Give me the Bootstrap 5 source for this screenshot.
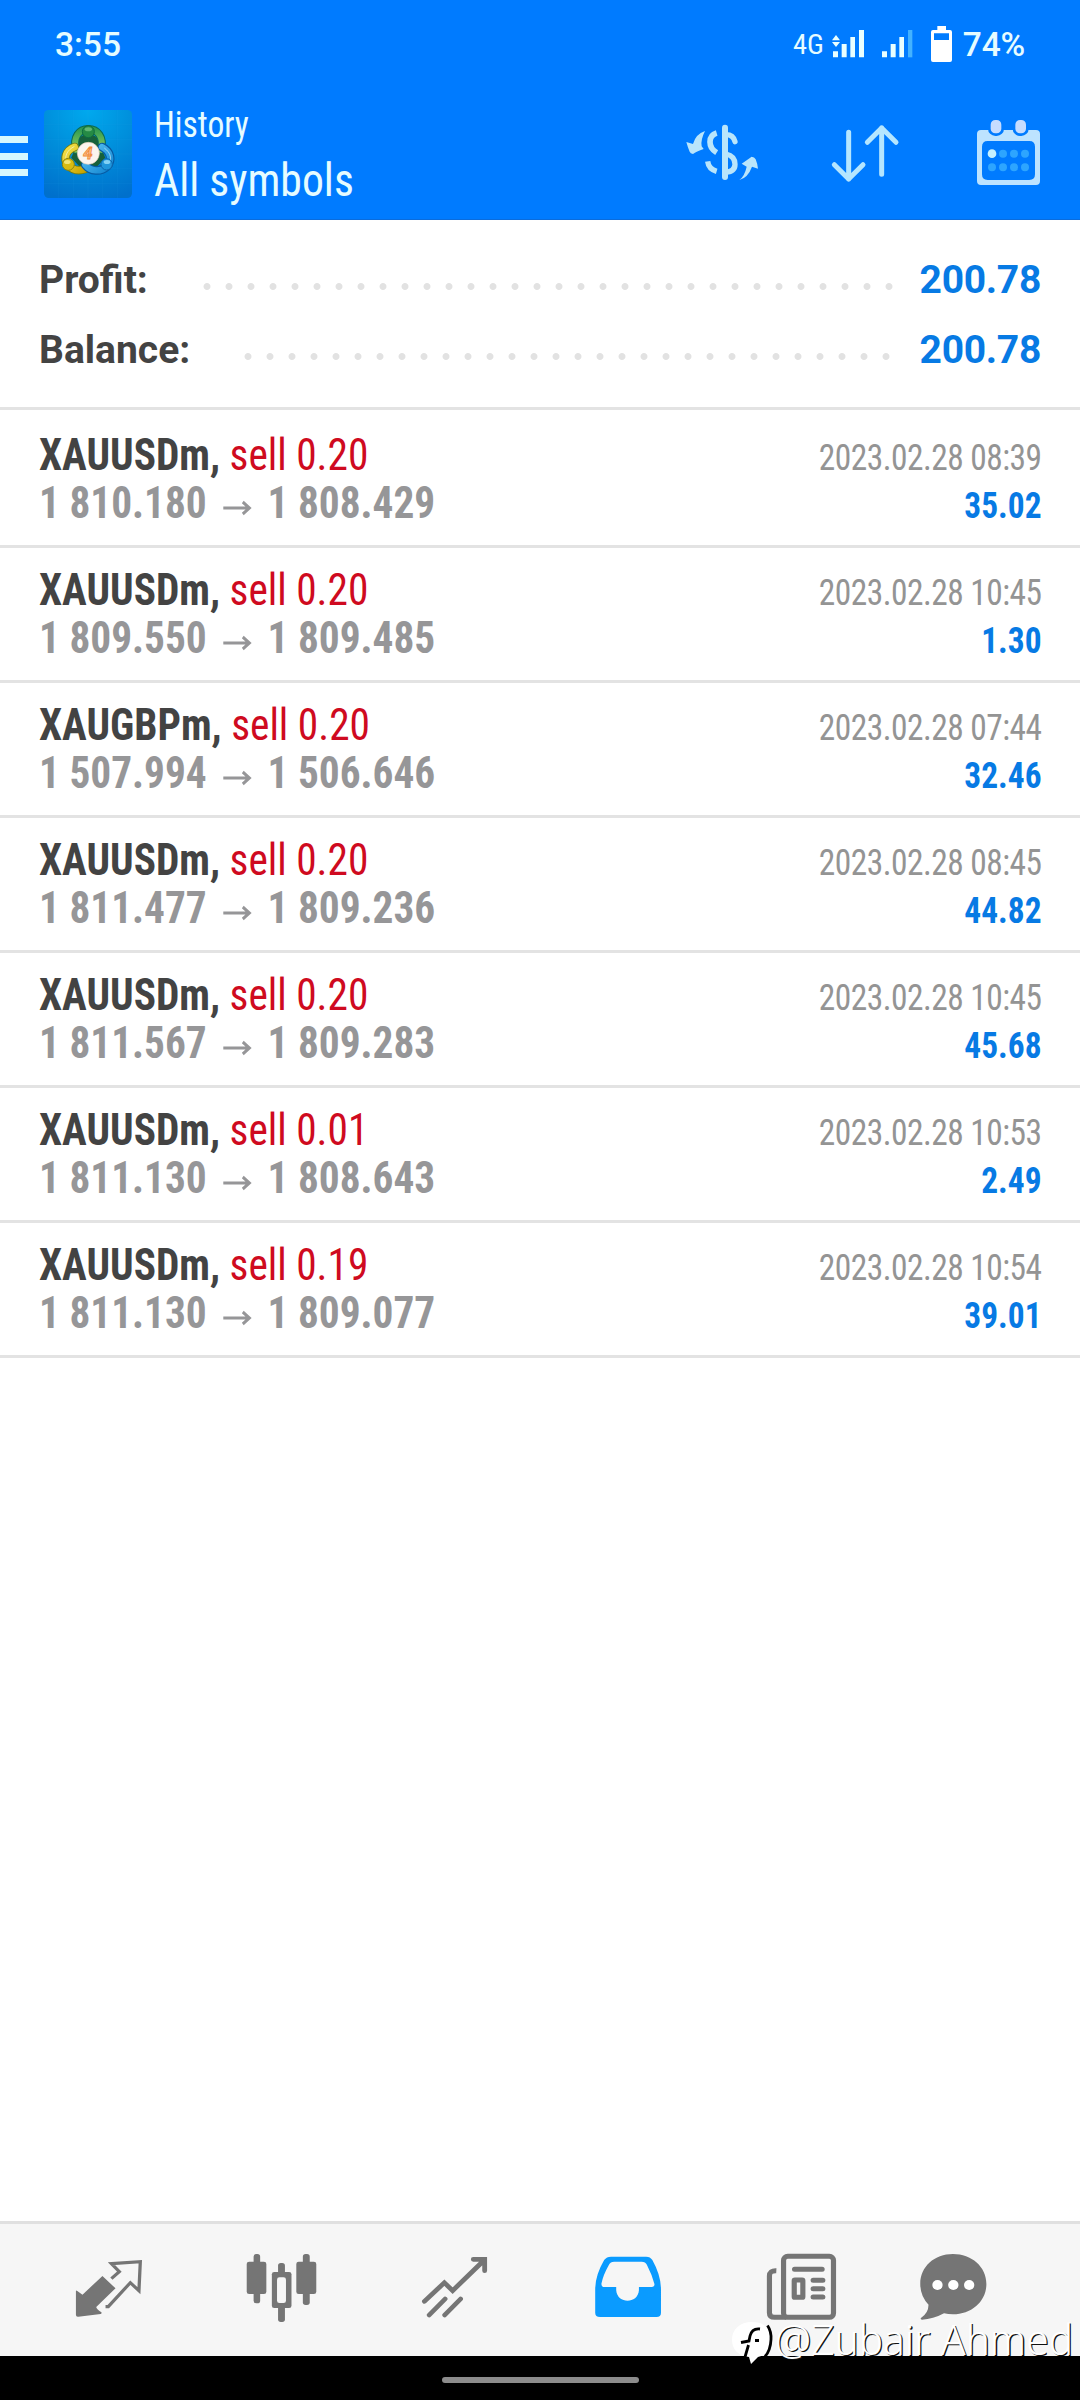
<!DOCTYPE html>
<html lang="en">
<head>
<meta charset="utf-8">
<meta name="viewport" content="width=device-width, initial-scale=1">
<title>History</title>
<link href="https://cdn.jsdelivr.net/npm/bootstrap@5.3.0/dist/css/bootstrap.min.css" rel="stylesheet">
<style>
body{font-family:Roboto,"Liberation Sans",sans-serif;background:#fff;color:#434343}
.screen{width:1080px;height:2400px;overflow:hidden}
.narrow{font-family:"Roboto Condensed",Roboto,sans-serif}
.top-area{height:220px;background:#007bff;border-bottom:1px solid #0b6cdc;color:#e6fcff}
.status-row{height:90px;padding:0 55px 0 55px;font-size:34px;line-height:90px}
.clock{font-weight:500;font-size:33.5px}
.net{font-size:28.5px}
.pct{font-size:33.5px;letter-spacing:-.2px;font-weight:500}
.app-row{height:129px}
.burger i{display:block;width:28px;height:7px;background:#d5f7ff;margin-bottom:9.6px}
.titles{margin-left:21.5px}
.t1,.t2{transform-origin:left;white-space:nowrap}
.t1{font-size:36.5px;line-height:44px;transform:scaleX(.92)}
.t2{font-size:47px;line-height:56px;transform:scaleX(.93);margin-top:5px}
.summary{height:190px;border-bottom:3px solid #e3e3e3;padding:25px 39px 0 39px;font-size:39px;font-weight:700}
.summary .line-item{height:70px;line-height:70px}
.summary .blue{letter-spacing:-.3px}
.leader{height:7px;margin-top:12px;background:radial-gradient(circle at 11px 3.5px,#e2e2e2 3px,rgba(226,226,226,0) 3.9px) 0 0/22px 7px repeat-x}
.blue{color:#077ae4}
.deal{height:135px;border-bottom:3px solid #e3e3e3;padding:0 38px 17px 39px}
.deal.first-deal{height:138px}
.deal-l{font-size:43.5px;line-height:48px;transform:scaleX(.95);transform-origin:left;white-space:nowrap}
.deal-r{font-size:36.5px;line-height:48px;transform:scaleX(.915);transform-origin:right;white-space:nowrap;margin-bottom:-2px}
.side-sell{color:#cf0a20}
.price{color:#969698}
.when{color:#949494;letter-spacing:-.55px}
.tabs{height:135px;background:#f6f6f6;border-top:3px solid #e0e0e0;padding-left:21.5px}
.tabs svg{height:132px;flex:none}
.sysbar{height:44px;background:#000}
.pill{width:197px;height:6px;border-radius:3px;background:#8c8c8c;margin-top:4px}
.wm{right:0;bottom:20px}
.wm text{text-shadow:1.3px .8px 0 #111;font-family:"Noto Sans",sans-serif}
</style>
<script src="https://cdn.jsdelivr.net/npm/bootstrap@5.3.0/dist/js/bootstrap.bundle.min.js"></script>
</head>
<body>
<div class="screen d-flex flex-column position-relative">
  <header class="top-area flex-shrink-0">
    <div class="status-row d-flex align-items-center">
      <span class="clock me-auto">3:55</span>
      <span class="net narrow">4G</span>
      <svg class="flex-shrink-0" style="margin-left:6px" width="133" height="90" viewBox="510 0 399 270">
        <g fill="#e9ffff">
          <path d="M516 121l12-16 12 16zM516 126h24l-12 15z"/>
          <path d="M519 154h15v18h-15zM545 132h15v40h-15zM571 111h14v61h-14zM597 90h15v82h-15z"/>
          <path d="M666 154h15v18h-15zM692 132h15v40h-15zM718 111h14v61h-14z"/>
          <path fill="#43b2ff" d="M744 90h13v82h-13z"/>
          <path fill="#fff" fill-rule="evenodd" d="M832 78h26v12h12q6 0 6 6v84q0 6-6 6h-51q-6 0-6-6V96q0-6 6-6h13zM822 100v20h45v-20z"/>
        </g>
      </svg>
      <span class="pct">74%</span>
    </div>
    <div class="app-row d-flex align-items-start">
      <div class="burger" style="margin-top:46px"><i></i><i></i><i></i></div>
      <svg style="margin:20px 0 0 16px" width="88" height="88" viewBox="42 31 264 264">
        <defs>
          <radialGradient id="tile" cx=".5" cy="0" r="1.05"><stop offset="0" stop-color="#00a9ee"/><stop offset=".5" stop-color="#008edb"/><stop offset="1" stop-color="#0070cc"/></radialGradient>
          <linearGradient id="gr" x2="0" y2="1"><stop offset="0" stop-color="#2f9a52"/><stop offset="1" stop-color="#8ccc5c"/></linearGradient>
          <linearGradient id="ye" x2="1" y2="1"><stop offset="0" stop-color="#f3e24a"/><stop offset="1" stop-color="#c9a400"/></linearGradient>
          <linearGradient id="bl" x2="1" y2="1"><stop offset="0" stop-color="#5cc4f4"/><stop offset="1" stop-color="#1286d2"/></linearGradient>
        </defs>
        <rect x="42" y="31" width="264" height="264" rx="14" fill="url(#tile)"/>
        <path d="M86 31v264M130 31v264M174 31v264M218 31v264M262 31v264M42 75h264M42 119h264M42 163h264M42 207h264M42 251h264" stroke="#2aa3e8" stroke-opacity=".3" fill="none"/>
        <path d="M150 112q24-18 50 0l26 62-26 28h-50l-26-28z" fill="#17603a"/>
        <g fill="none" stroke-linecap="round">
          <path d="M138 150C128 112 148 88 175 88s48 24 38 62" stroke="#0b6a55" stroke-width="24"/>
          <path d="M138 150C128 112 148 88 175 88s48 24 38 62" stroke="url(#gr)" stroke-width="18"/>
          <path d="M134 142c-28 10-34 36-20 54 14 16 34 18 52 12" stroke="#6f7c14" stroke-width="26"/>
          <path d="M134 142c-28 10-34 36-20 54 14 16 34 18 52 12" stroke="url(#ye)" stroke-width="20"/>
          <path d="M216 142c28 14 30 40 16 58-20 18-50 16-66-4" stroke="#075aa2" stroke-width="26"/>
          <path d="M216 142c28 14 30 40 16 58-20 18-50 16-66-4" stroke="url(#bl)" stroke-width="19"/>
          <path d="M224 146c20 14 22 34 12 50M132 141c-20 10-28 26-24 44" stroke="#f4ffff" stroke-opacity=".55" stroke-width="3"/>
        </g>
        <circle cx="175" cy="96" r="18" fill="#258a45" stroke="#0f6b40" stroke-width="3"/>
        <ellipse cx="175" cy="89" rx="11" ry="6" fill="#7cc987" opacity=".7"/>
        <circle cx="115" cy="194" r="18" fill="#d7bb12" stroke="#8b8510" stroke-width="3"/>
        <ellipse cx="112" cy="187" rx="10" ry="6" fill="#f7ef8c" opacity=".8"/>
        <circle cx="230" cy="194" r="17" fill="#2196da" stroke="#0c66ae" stroke-width="3"/>
        <ellipse cx="231" cy="187" rx="10" ry="6" fill="#9be0fa" opacity=".8"/>
        <circle cx="175" cy="161" r="33" fill="#fbf5ee" stroke="#e2cdb6" stroke-width="2"/>
        <text x="174" y="179" text-anchor="middle" font-family="Roboto" font-style="italic" font-weight="700" font-size="50" fill="#ffc48a" stroke="#f08a3a" stroke-width="2.5">4</text>
      </svg>
      <div class="titles narrow" style="margin-top:12.500px">
        <div class="t1">History</div>
        <div class="t2">All symbols</div>
      </div>
      <svg class="ms-auto flex-shrink-0" width="400" height="129" viewBox="60 270 1200 387">
        <g fill="#b9e5fb">
          <path d="M135 393q-14 28-10 46l6 8q-22 8-32 15-8-1-10-7-6-14-10-29l20 6q8-30 36-39zM238 540q16-12 22-40l-15-9 30-21q8 0 12 8 5 12 7 28l-18-6q-12 33-38 40z"/>
        </g>
        <g fill="none" stroke="#b9e5fb">
          <path d="M170 399q-20 6-20 27 0 20 20 32" stroke-width="17"/>
          <path d="M143 484q3 23 27 30" stroke-width="16"/>
          <path d="M195 383v148" stroke-width="18" stroke-linecap="round"/>
          <path d="M198 404q22 0 27 21M198 462q27 6 27 31 0 22-27 24" stroke-width="16" stroke-linecap="round"/>
          <path d="M566 397v140M523 494l43 43 43-43M665 523V383M622 427l43-43 43 43" stroke="#b5e6ff" stroke-width="15" stroke-linecap="round" stroke-linejoin="round"/>
        </g>
        <path fill="#bde3ff" fill-rule="evenodd" d="M963 390h165q12 0 12 12v141q0 12-12 12H963q-12 0-12-12V402q0-12 12-12zM983 423q-17 0-17 17v83q0 17 17 17h125q17 0 17-17v-83q0-17-17-17z"/>
        <g fill="#c6dcff" stroke="#007bff" stroke-width="8"><rect x="988" y="356" width="40" height="48" rx="18"/><rect x="1062" y="356" width="40" height="48" rx="18"/></g>
        <g fill="#2da5ff"><circle cx="996" cy="461" r="13" fill="#c6f1ff"/><circle cx="1029" cy="461" r="12"/><circle cx="1062" cy="461" r="12"/><circle cx="1095" cy="461" r="12"/><circle cx="996" cy="502" r="12"/><circle cx="1029" cy="502" r="12"/><circle cx="1062" cy="502" r="12"/><circle cx="1095" cy="502" r="12"/></g>
      </svg>
    </div>
  </header>

  <section class="summary flex-shrink-0">
    <div class="line-item d-flex align-items-center justify-content-between">
      <span>Profit:</span><span class="leader ms-auto" style="width:704px;margin-right:20px"></span><span class="blue">200.78</span>
    </div>
    <div class="line-item d-flex align-items-center justify-content-between">
      <span>Balance:</span><span class="leader ms-auto" style="width:660px;margin-right:23px"></span><span class="blue">200.78</span>
    </div>
  </section>

  <main id="deals" class="flex-grow-1 narrow"></main>

  <nav class="tabs d-flex flex-shrink-0" id="tabs">
    <svg width="173" viewBox="62.4 72 502.4 396" preserveAspectRatio="none" fill="#757575">
      <path d="M219 274q0-4 4-1l15 11 58-56 38 37-56 56q0 6 15 16 2 4-2 5l-65 8q-7 1-7-6z"/>
      <path d="M322 236l23-21-23-24 84-6-4 87-25-24-64 72h-8" fill="none" stroke="#757575" stroke-width="9.500" stroke-linejoin="miter"/>
    </svg>
    <svg width="173" viewBox="564.8 72 502.4 396" preserveAspectRatio="none" fill="#757575">
      <rect x="735" y="162" width="19" height="148" rx="8"/><rect x="715" y="185" width="57" height="97" rx="7"/>
      <rect x="878" y="162" width="20" height="153" rx="8"/><rect x="859" y="185" width="58" height="97" rx="7"/>
      <rect x="806" y="189" width="20" height="177" rx="8"/><rect x="788" y="216" width="57" height="108" rx="7"/><rect x="803" y="232" width="26" height="77" rx="7" fill="#f6f6f6"/>
    </svg>
    <svg width="173" viewBox="1067.2 72 502.4 396" preserveAspectRatio="none" fill="none" stroke="#757575" stroke-width="14" stroke-linecap="round">
      <path d="M1231 304l58-56 24 24 92-92M1373 178h33v34M1245 345l46-48M1290 345l46-48"/>
    </svg>
    <svg width="173" viewBox="1.6 72 502.4 396" preserveAspectRatio="none">
      <path fill="#0a9bff" fill-rule="evenodd" d="M205 170h102q12 0 18 10 25 46 25 88v70q0 13-13 13H173q-14 0-14-13v-70q0-42 26-88 7-10 20-10zM214 185q-11 0-15 9-17 31-22 57 0 10 9 10h34v10c3 42 63 42 66 0v-10h37q9 0 8-9-7-28-22-58-4-9-15-9z"/>
    </svg>
    <svg width="173" viewBox="504 72 502.4 396" preserveAspectRatio="none" fill="none" stroke="#757575" stroke-width="15">
      <rect x="706" y="169" width="145" height="183" rx="12"/>
      <path d="M685 212q-20-1-20 16v110q0 14 15 14h34" />
      <path d="M738 208h80M792 241h28M792 266h28M792 291h28" stroke-linecap="round"/>
      <rect x="737" y="240" width="25" height="52" rx="2"/>
    </svg>
    <svg width="150" viewBox="1006.4 72 435.6 396" preserveAspectRatio="none" fill="#757575">
      <path d="M1198 162c54 0 97 38 97 90s-43 91-97 91q-14 0-26-3-32 18-64 19-6-1-3-5 22-16 22-40-24-26-24-62c0-52 41-90 95-90z"/>
      <g fill="#fff"><circle cx="1153" cy="255" r="15"/><circle cx="1199" cy="255" r="15"/><circle cx="1245" cy="255" r="15"/></g>
    </svg>
  </nav>
  <div class="sysbar d-flex justify-content-center align-items-center flex-shrink-0"><div class="pill"></div></div>

  <svg class="wm position-absolute" width="360" height="70" viewBox="720 2310 360 70">
    <path fill="#fff" d="M752 2322c12 0 19 7 19 18 0 9-5 15-13 17l-7 7-2-7c-11-1-17-8-17-17 0-11 8-18 20-18z"/>
    <path d="M767.500 2325.500q4 6 3.500 14-.5 11-6 17" fill="none" stroke="#000" stroke-width="2.800"/>
    <path d="M760 2329q-8-1-10 7l-1 5-8 1.500M748.500 2345l-3.500 12M755 2340.500h4" fill="none" stroke="#000" stroke-width="2.800"/>
    <text x="775" y="2355" font-size="41.500" font-weight="300" fill="#fff" textLength="298" lengthAdjust="spacingAndGlyphs">@Zubair Ahmed</text>
  </svg>
</div>
<script>
const deals = [
  ["XAUUSDm","0.20","1 810.180","1 808.429","2023.02.28 08:39","35.02"],
  ["XAUUSDm","0.20","1 809.550","1 809.485","2023.02.28 10:45","1.30"],
  ["XAUGBPm","0.20","1 507.994","1 506.646","2023.02.28 07:44","32.46"],
  ["XAUUSDm","0.20","1 811.477","1 809.236","2023.02.28 08:45","44.82"],
  ["XAUUSDm","0.20","1 811.567","1 809.283","2023.02.28 10:45","45.68"],
  ["XAUUSDm","0.01","1 811.130","1 808.643","2023.02.28 10:53","2.49"],
  ["XAUUSDm","0.19","1 811.130","1 809.077","2023.02.28 10:54","39.01"]
];
const arrow = '<svg width="64" height="20" viewBox="0 0 64 20" fill="none" stroke="#969698" stroke-width="3"><path d="M17 10h27M37.500 4l7 6-7 6"/></svg>';
document.getElementById("deals").innerHTML = deals.map((d, i) => `
  <div class="deal d-flex justify-content-between align-items-end ${i ? "" : "first-deal"}">
    <div class="deal-l"><div><b>${d[0]},</b> <span class="side-sell">sell ${d[1]}</span></div>
      <div class="price d-flex align-items-center fw-bold"><span>${d[2]}</span><span class="d-flex pt-2">${arrow}</span><span>${d[3]}</span></div></div>
    <div class="deal-r text-end"><div class="when">${d[4]}</div><div class="blue fw-bold">${d[5]}</div></div>
  </div>`).join("");
</script>
</body>
</html>
